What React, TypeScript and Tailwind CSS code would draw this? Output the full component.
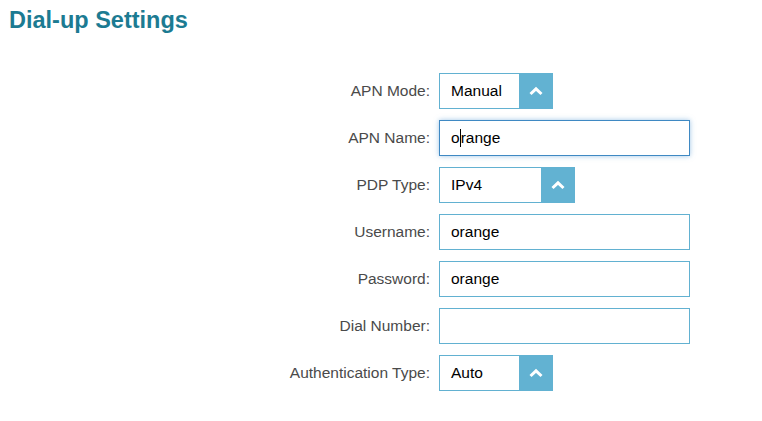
import React from 'react';

const font = { fontFamily: '"Liberation Sans", Arial, sans-serif' };

const Chevron: React.FC = () => (
  <svg width="16" height="10" viewBox="0 0 16 10" className="block">
    <path d="M2.5 8 L8 2.8 L13.5 8" fill="none" stroke="#fff" strokeWidth="3" strokeLinejoin="miter" />
  </svg>
);

const Row: React.FC<{ label: string; children: React.ReactNode }> = ({ label, children }) => (
  <div className="flex items-center h-[36px]">
    <div className="w-[431px] text-right text-[15.5px] text-[#4a4a4a] pr-[1px]">{label}</div>
    <div className="ml-[8px]">{children}</div>
  </div>
);

const SelectBox: React.FC<{ value: string; width: string }> = ({ value, width }) => (
  <div className={`flex h-[36px] border border-[#62b1d1] bg-white ${width}`}>
    <div className="flex-1 flex items-center pl-[11px] text-[15.5px] text-black">{value}</div>
    <div className="w-[34px] -my-[1px] -mr-[1px] bg-[#62b2d2] flex items-center justify-center">
      <Chevron />
    </div>
  </div>
);

const TextBox: React.FC<{ value?: string; focused?: boolean }> = ({ value = '', focused }) => (
  <div
    className={`w-[251px] h-[36px] flex items-center pl-[11px] text-[15.5px] text-black bg-white border ${
      focused ? 'border-[#3f89c3] shadow-[0_0_5px_rgba(80,150,210,0.55)]' : 'border-[#62b1d1]'
    }`}
  >
    {focused ? (
      <>
        <span>{value.slice(0, 1)}</span>
        <span className="inline-block w-[1px] h-[18px] bg-black" />
        <span>{value.slice(1)}</span>
      </>
    ) : (
      value
    )}
  </div>
);

export default function App() {
  return (
    <div className="w-[762px] h-[421px] bg-white" style={font}>
      <h1 className="pl-[9px] pt-[6px] text-[23.5px] font-bold text-[#1c7b92] leading-[28px]">Dial-up Settings</h1>
      <div className="mt-[39px] flex flex-col gap-[11px]">
        <Row label="APN Mode:">
          <SelectBox value="Manual" width="w-[114px]" />
        </Row>
        <Row label="APN Name:">
          <TextBox value="orange" focused />
        </Row>
        <Row label="PDP Type:">
          <SelectBox value="IPv4" width="w-[136px]" />
        </Row>
        <Row label="Username:">
          <TextBox value="orange" />
        </Row>
        <Row label="Password:">
          <TextBox value="orange" />
        </Row>
        <Row label="Dial Number:">
          <TextBox />
        </Row>
        <Row label="Authentication Type:">
          <SelectBox value="Auto" width="w-[114px]" />
        </Row>
      </div>
    </div>
  );
}
